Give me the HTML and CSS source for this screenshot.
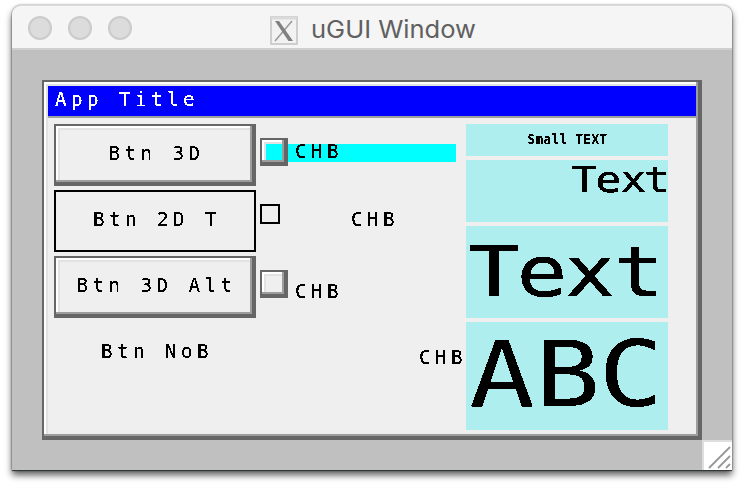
FILE: index.html
```html
<!DOCTYPE html>
<html lang="en">
<head>
<meta charset="utf-8">
<title>uGUI Window</title>
<link rel="stylesheet" href="styles.css">
</head>
<body>
<svg class="defs" width="0" height="0" aria-hidden="true">
  <filter id="crisp" x="0" y="0" width="100%" height="100%">
    <feComponentTransfer><feFuncA type="discrete" tableValues="0 0 1 1 1"/></feComponentTransfer>
  </filter>
</svg>
<main class="window">
  <header class="titlebar">
    <div class="lights"><i></i><i></i><i></i></div>
    <svg class="x-icon" width="28" height="29" viewBox="0 0 28 29">
      <rect x="1" y="1" width="26" height="27" fill="#f2f2f2" stroke="#c2c2c2" stroke-width="1.5"/>
      <path d="M1 2h26" stroke="#dadada" stroke-width="3"/>
      <path d="M22 5L5 25" stroke="#999" stroke-width="1.5"/>
      <path d="M5 5h4L23 25h-4.5z" fill="#808080"/>
    </svg>
    <svg class="name" width="170" height="32"><text x="0" y="23" textLength="165" lengthAdjust="spacingAndGlyphs">uGUI Window</text></svg>
  </header>
  <section class="desktop">
    <div class="app bevel">
      <div class="app-title"><span class="px">App Title</span></div>
      <div class="content">
        <div class="column">
          <div class="btn bevel"><span class="px">Btn 3D</span></div>
          <div class="btn flat"><span class="px">Btn 2D T</span></div>
          <div class="btn bevel"><span class="px">Btn 3D Alt</span></div>
          <div class="btn"><span class="px">Btn NoB</span></div>
        </div>
        <div class="column">
          <div class="check"><i class="box bevel on"></i><div class="label lit"><span class="px">CHB</span></div></div>
          <div class="check"><i class="box plain"></i><div class="label mid"><span class="px">CHB</span></div></div>
          <div class="check"><i class="box bevel"></i><div class="label low"><span class="px">CHB</span></div></div>
          <div class="check"><div class="label end"><span class="px">CHB</span></div></div>
        </div>
        <div class="column">
          <svg class="panel" width="202" height="32"><text class="small" transform="scale(.94 1)" x="65.4 73.9 82.4 90.9 99.4 108 116.5 125 133.5 142" y="20">Small TEXT</text></svg>
          <svg class="panel" width="202" height="62"><text class="medium" transform="scale(1.2 1)" x="87.8 107.9 128.7 148.4" y="32">Text</text></svg>
          <svg class="panel" width="202" height="92"><text class="large" transform="scale(1.22 1)" x="2.3 41.6 81 121.2" y="70">Text</text></svg>
          <svg class="panel" width="202" height="108"><text class="huge" transform="scale(1.2 1)" x="2.7 57.5 110.3" y="84">ABC</text></svg>
        </div>
      </div>
    </div>
    <svg class="grip" width="30" height="30" viewBox="0 0 30 30">
      <path d="M0 0h30v30H0z" fill="#dedede"/><path d="M2 2h28v28H2z" fill="#fff"/>
      <path d="M7 28L28 7M16 28L28 16M24 28l4-4" stroke="#999" stroke-width="1.8"/>
    </svg>
  </section>
</main>
</body>
</html>
```

FILE: styles.css
```css
* { box-sizing: border-box; }
body { margin: 0; width: 744px; height: 488px; padding: 5px 12px 0; background: #fff; overflow: hidden; }
.defs { position: absolute; }
svg { display: block; }
.window {
  width: 720px; height: 465px; border-radius: 9px 9px 0 0; background: #c0c0c0;
  box-shadow: 0 0 2px rgba(0,0,0,.5), 0 1px 1px #343c38, 0 5px 7px rgba(0,0,0,.65);
}
.titlebar {
  display: flex; height: 45px; padding: 0 16px; border-top: 1px solid #dcdcdc;
  border-bottom: 2px solid #cfcfcf; border-radius: 9px 9px 0 0; background: #f5f5f5;
}
.lights { display: flex; gap: 16px; padding-top: 10px; width: 242px; }
.lights i { width: 24px; height: 24px; border: 2px solid #cbcbcb; border-radius: 50%; background: #dcdcdc; }
.x-icon { margin-top: 10px; }
.name { margin: 9px 0 0 13px; overflow: visible; font: 24.5px Inter, "Liberation Sans", sans-serif; fill: #606060; }
.desktop { height: 420px; padding: 30px 0 0 30px; display: flex; }
.bevel {
  border: solid #666; border-width: 2px 4px 4px 2px;
  box-shadow: inset -2px -2px #9d9d9d, inset 2px 2px #fff, inset 4px 4px #e2e2e2;
  background: #efefef;
}
.app { width: 660px; height: 360px; padding: 4px 2px 2px 4px; flex: none; }
.px {
  display: block; font: 19.2px/15px "DejaVu Sans Mono", monospace; letter-spacing: 4.44px;
  white-space: pre; color: inherit; filter: url(#crisp); padding: 4px 0; margin: -4px 0;
}
.app-title { height: 32px; padding: 6px 0 0 7px; color: #fff; background: #00f; border-bottom: 2px solid #9d9d9d; }
.content { display: grid; grid-template-columns: repeat(3, 202px); gap: 4px; padding: 6px 0 0 6px; color: #000; }
.column { display: flex; flex-direction: column; gap: 4px; }
.btn { height: 62px; display: flex; justify-content: center; padding: 22px 0 0 4px; }
.btn.bevel { padding: 20px 0 0 5px; }
.btn.flat { border: 2px solid #000; padding: 20px 0 0 4px; }
.check { height: 62px; display: flex; align-items: flex-start; padding-top: 14px; }
.box { flex: none; width: 28px; height: 28px; }
.box.on { background: #0ff; }
.box.plain { width: 20px; height: 20px; border: 2px solid #000; }
.label { padding-left: 7px; }
.lit { width: 168px; height: 18px; margin-top: 6px; background: #0ff; }
.mid { margin: 8px 0 0 64px; }
.low { margin-top: 14px; }
.end { margin: 14px 0 0 152px; }
.panel { background: #afeeee; }
.panel text { font-family: "DejaVu Sans Mono", monospace; filter: url(#crisp); }
.small { font-size: 13.3px; font-weight: bold; }
.medium { font-size: 35.7px; stroke: #000; stroke-width: .3px; }
.large { font-size: 68.6px; stroke: #000; stroke-width: .4px; }
.huge { font-size: 90.5px; }
.grip { margin: 360px 0 0 0; flex: none; }
```
